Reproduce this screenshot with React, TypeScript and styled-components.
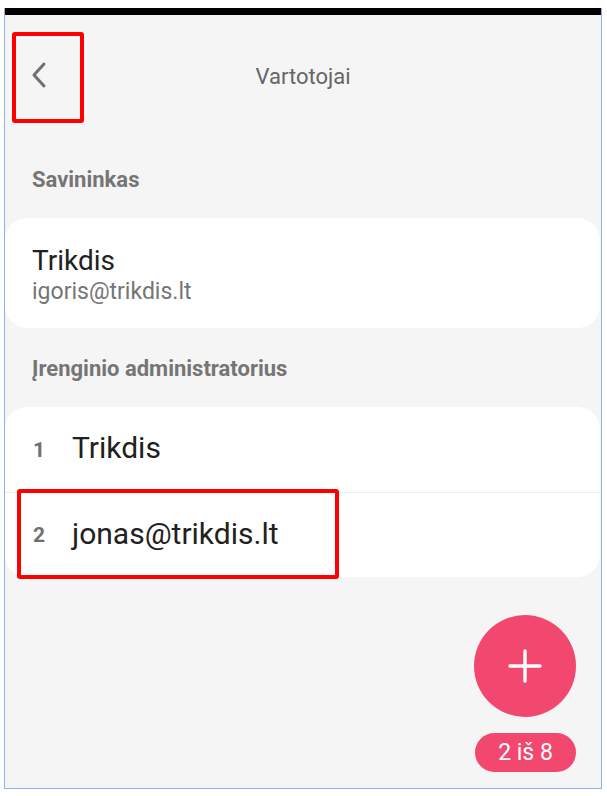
import React from 'react';
import styled, { createGlobalStyle } from 'styled-components';

const GlobalStyle = createGlobalStyle`
  html, body {
    margin: 0;
    padding: 0;
    background: #ffffff;
  }
  body {
    font-family: Roboto, "Noto Sans", "Liberation Sans", sans-serif;
  }
`;

const Frame = styled.div`
  position: relative;
  box-sizing: border-box;
  margin: 8px 0 0 4px;
  width: 598px;
  height: 781px;
  border: 1px solid #8db3de;
  border-top: none;
  background: #f5f5f5;
  display: flex;
  flex-direction: column;
`;

const StatusBar = styled.div`
  height: 7px;
  background: #000000;
`;

const Header = styled.header`
  height: 124px;
  display: flex;
  align-items: center;
  justify-content: center;
  position: relative;
`;

const BackButton = styled.button`
  position: absolute;
  left: 19px;
  top: 45px;
  width: 30px;
  height: 30px;
  padding: 0;
  border: none;
  background: transparent;
  display: flex;
  align-items: center;
  justify-content: center;
  color: #707070;
`;

const Title = styled.h1`
  margin: 0;
  font-size: 22px;
  font-weight: 400;
  color: #666666;
  transform: translateY(-1px);
`;

const SectionLabel = styled.div`
  padding: 29px 27px 0;
  height: 24px;
  line-height: 24px;
  font-size: 22px;
  font-weight: 700;
  color: #757575;
`;

const Card = styled.div`
  margin: 26px 1px 0 0;
  background: #ffffff;
  border-radius: 22px;
  overflow: hidden;
`;

const OwnerBody = styled.div`
  height: 110px;
  box-sizing: border-box;
  padding: 26px 27px 0;
  display: flex;
  flex-direction: column;
`;

const OwnerName = styled.div`
  font-size: 28px;
  line-height: 34px;
  color: #212121;
`;

const OwnerEmail = styled.div`
  font-size: 23px;
  line-height: 28px;
  color: #757575;
`;

const Row = styled.div<{ $divider?: boolean }>`
  height: 85px;
  display: flex;
  align-items: center;
  padding: 0 0 4px 28px;
  border-top: ${(p) => (p.$divider ? '1px solid #ececec' : 'none')};
  box-sizing: border-box;
`;

const RowIndex = styled.span`
  width: 39px;
  font-size: 21px;
  font-weight: 700;
  color: #6f6f6f;
  transform: translateY(2px);
`;

const RowText = styled.span`
  font-size: 30px;
  color: #212121;
`;

const Fab = styled.button`
  position: absolute;
  left: 469px;
  top: 607px;
  width: 102px;
  height: 102px;
  border-radius: 50%;
  border: none;
  padding: 0;
  background: #f2476f;
  display: flex;
  align-items: center;
  justify-content: center;
`;

const CounterPill = styled.div`
  position: absolute;
  left: 470px;
  top: 725px;
  width: 101px;
  height: 39px;
  border-radius: 20px;
  background: #f2476f;
  color: #ffffff;
  font-size: 23px;
  display: flex;
  align-items: center;
  justify-content: center;
`;

const Highlight = styled.div<{ $x: number; $y: number; $w: number; $h: number }>`
  position: absolute;
  left: ${(p) => p.$x}px;
  top: ${(p) => p.$y}px;
  width: ${(p) => p.$w}px;
  height: ${(p) => p.$h}px;
  box-sizing: border-box;
  border: 4px solid #ff0000;
  border-radius: 3px;
  pointer-events: none;
`;

const admins = ['Trikdis', 'jonas@trikdis.lt'];

export default function App() {
  return (
    <>
      <GlobalStyle />
      <Frame>
        <StatusBar />
        <Header>
          <BackButton aria-label="Atgal">
            <svg width="22" height="28" viewBox="0 0 22 28" fill="none">
              <path
                d="M16 3 L6 14 L16 25"
                stroke="currentColor"
                strokeWidth="3"
                strokeLinecap="round"
                strokeLinejoin="round"
              />
            </svg>
          </BackButton>
          <Title>Vartotojai</Title>
        </Header>

        <SectionLabel>Savininkas</SectionLabel>
        <Card>
          <OwnerBody>
            <OwnerName>Trikdis</OwnerName>
            <OwnerEmail>igoris@trikdis.lt</OwnerEmail>
          </OwnerBody>
        </Card>

        <SectionLabel>Įrenginio administratorius</SectionLabel>
        <Card>
          {admins.map((name, i) => (
            <Row key={name} $divider={i > 0}>
              <RowIndex>{i + 1}</RowIndex>
              <RowText>{name}</RowText>
            </Row>
          ))}
        </Card>

        <Fab aria-label="Pridėti">
          <svg width="36" height="36" viewBox="0 0 36 36">
            <path
              d="M18 3 V33 M3 18 H33"
              stroke="#ffffff"
              strokeWidth="3.4"
              strokeLinecap="round"
            />
          </svg>
        </Fab>
        <CounterPill>2 iš 8</CounterPill>

        <Highlight $x={7} $y={24} $w={72} $h={91} />
        <Highlight $x={12} $y={481} $w={322} $h={90} />
      </Frame>
    </>
  );
}
